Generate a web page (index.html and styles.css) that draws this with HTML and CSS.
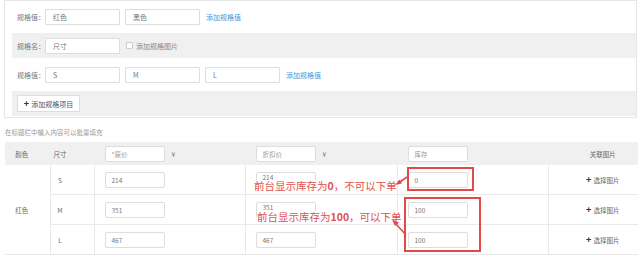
FILE: index.html
```html
<!DOCTYPE html>
<html lang="zh-CN">
<head>
    <meta charset="UTF-8">
    <title>规格设置</title>
    <link rel="stylesheet" href="styles.css">
</head>
<body>
    <!-- 规格项 -->
    <div class="spec-panel">
        <div class="spec-row">
            <span class="spec-label">规格值：</span>
            <input class="spec-input" type="text" value="红色">
            <input class="spec-input" type="text" value="黑色">
            <a href="#" class="spec-link">添加规格值</a>
        </div>
        <div class="spec-row gray">
            <span class="spec-label">规格名：</span>
            <input class="spec-input" type="text" value="尺寸">
            <label class="spec-check"><span class="box"></span>添加规格图片</label>
        </div>
        <div class="spec-row tall">
            <span class="spec-label">规格值：</span>
            <input class="spec-input" type="text" value="S">
            <input class="spec-input" type="text" value="M">
            <input class="spec-input" type="text" value="L">
            <a href="#" class="spec-link">添加规格值</a>
        </div>
        <div class="spec-row gray">
            <button class="add-btn"><b>+</b>添加规格项目</button>
        </div>
    </div>

    <p class="tip">在标题栏中输入内容可以批量填充</p>

    <!-- SKU 表格 -->
    <div class="sku-wrap">
        <table class="sku-table">
            <colgroup>
                <col style="width:45px">
                <col style="width:44px">
                <col style="width:151px">
                <col style="width:152px">
                <col style="width:151px">
                <col style="width:90px">
            </colgroup>
            <thead>
                <tr>
                    <th class="c-color">颜色</th>
                    <th class="c-size">尺寸</th>
                    <th class="c-field"><span class="cell-input ph">*原价</span><span class="yen">¥</span></th>
                    <th class="c-field"><span class="cell-input ph">折扣价</span><span class="yen">¥</span></th>
                    <th class="c-field"><span class="cell-input ph">库存</span></th>
                    <th class="c-pic">关联图片</th>
                </tr>
            </thead>
            <tbody>
                <tr>
                    <td class="c-color" rowspan="3">红色</td>
                    <td class="c-size">S</td>
                    <td class="c-field"><span class="cell-input">214</span></td>
                    <td class="c-field"><span class="cell-input hi">214</span></td>
                    <td class="c-field"><span class="cell-input">0</span></td>
                    <td class="c-pic"><a href="#" class="pick"><b>+</b>选择图片</a></td>
                </tr>
                <tr>
                    <td class="c-size">M</td>
                    <td class="c-field"><span class="cell-input">351</span></td>
                    <td class="c-field"><span class="cell-input hi">351</span></td>
                    <td class="c-field"><span class="cell-input">100</span></td>
                    <td class="c-pic"><a href="#" class="pick"><b>+</b>选择图片</a></td>
                </tr>
                <tr>
                    <td class="c-size">L</td>
                    <td class="c-field"><span class="cell-input">467</span></td>
                    <td class="c-field"><span class="cell-input">467</span></td>
                    <td class="c-field"><span class="cell-input">100</span></td>
                    <td class="c-pic"><a href="#" class="pick"><b>+</b>选择图片</a></td>
                </tr>
            </tbody>
        </table>

        <!-- 标注 -->
        <div class="note note-1">前台显示库存为<b>0</b>，不可以下单</div>
        <div class="note note-2">前台显示库存为<b>100</b>，可以下单</div>
        <div class="mark mark-1"></div>
        <div class="mark mark-2"></div>
        <svg class="arrows" width="633" height="115" viewBox="0 0 633 115">
            <line x1="402" y1="35" x2="394" y2="40.5" stroke="#e24a4a" stroke-width="1.6"/>
            <polygon points="390,43 394.5,37.5 397,41.5" fill="#e24a4a"/>
            <line x1="401" y1="93" x2="391" y2="82" stroke="#e24a4a" stroke-width="1.6"/>
            <polygon points="387,77.5 394,80.5 390,84" fill="#e24a4a"/>
        </svg>
    </div>
</body>
</html>
```

FILE: styles.css
```css
/* 기본 */
body {
    margin: 0;
    width: 640px;
    font-family: "Noto Sans CJK SC", "Liberation Sans", sans-serif;
    font-size: 7px;
    color: #666;
    background: #fff;
}

/* 规格 패널 */
.spec-panel {
    margin-left: 4px;
    width: 633px;
    box-sizing: border-box;
    border: 1px solid #e6e6e6;
    padding: 0 0 1px 7px;
}

.spec-row {
    height: 32px;
    display: flex;
    align-items: center;
    padding-left: 5px;
}

.spec-row.tall {
    height: 33px;
}

.spec-row.gray {
    height: 25px;
    background: #f0f0f0;
}

.spec-label {
    width: 28px;
    color: #777;
}

.spec-input {
    width: 75px;
    height: 16px;
    box-sizing: border-box;
    margin: 0 5px 0 0;
    padding: 0 7px;
    border: 1px solid #ddd;
    border-radius: 1px;
    background: #fff;
    font-family: inherit;
    font-size: 7px;
    color: #777;
}

.spec-link {
    margin-left: 1px;
    color: #3a9ad9;
    text-decoration: none;
}

.spec-check {
    display: flex;
    align-items: center;
    margin-left: 1px;
    color: #888;
}

.spec-check .box {
    width: 5px;
    height: 5px;
    border: 1px solid #ccc;
    border-radius: 1px;
    margin-right: 3px;
    background: #fff;
}

.add-btn {
    height: 17px;
    width: 63px;
    padding: 0;
    border: 1px solid #ddd;
    background: #fff;
    font-family: inherit;
    font-size: 7px;
    color: #555;
}

.add-btn b {
    margin-right: 2px;
    font-size: 9px;
    color: #333;
}

/* 안내 */
.tip {
    margin: 9px 0 0 5px;
    height: 15px;
    line-height: 10px;
    font-size: 6.5px;
    color: #999;
}

/* 테이블 */
.sku-wrap {
    position: relative;
    margin-left: 5px;
    width: 633px;
}

.sku-table {
    width: 633px;
    border-collapse: collapse;
    table-layout: fixed;
}

.sku-table th,
.sku-table td {
    padding: 0;
    border: 1px solid #e9e9e9;
    font-weight: normal;
    font-size: 6.5px;
    color: #666;
}

.sku-table thead th {
    height: 21px;
    background: #f0f0f0;
    border-color: #f0f0f0;
}

.sku-table tbody td {
    height: 29px;
}

.sku-table .c-color {
    text-align: center;
    padding-right: 11px;
    border-left: none;
}

.sku-table .c-size {
    text-align: center;
    padding-right: 24px;
}

.sku-table .c-field {
    text-align: left;
    padding-left: 10px;
    white-space: nowrap;
}

.sku-table .c-pic {
    text-align: center;
    padding-left: 19px;
    border-right: none;
}

.cell-input {
    display: inline-block;
    vertical-align: middle;
    width: 60px;
    height: 16px;
    line-height: 14px;
    box-sizing: border-box;
    padding-left: 6px;
    border: 1px solid #ddd;
    border-radius: 2px;
    background: #fff;
    color: #777;
}

.cell-input.ph {
    color: #999;
}

/* 빨간 글씨에 가려진 칸은 글자가 위에 붙어 보임 */
.cell-input.hi {
    line-height: 9px;
}

.yen {
    vertical-align: middle;
    margin-left: 7px;
    color: #777;
}

.pick {
    color: #666;
    text-decoration: none;
}

.pick b {
    margin-right: 2px;
    font-size: 9px;
    color: #333;
}

/* 빨간 표시 */
.note {
    position: absolute;
    font-size: 10.5px;
    line-height: 11px;
    color: #e05050;
    background: #fff;
    white-space: nowrap;
}

.note-1 {
    left: 249px;
    top: 38px;
}

.note-2 {
    left: 252px;
    top: 69px;
}

.mark {
    position: absolute;
    border: 2px solid #e24a4a;
    box-sizing: border-box;
}

.mark-1 {
    left: 402px;
    top: 25px;
    width: 67px;
    height: 24px;
}

.mark-2 {
    left: 399px;
    top: 55px;
    width: 77px;
    height: 55px;
}

.arrows {
    position: absolute;
    left: 0;
    top: 0;
    pointer-events: none;
}
```
